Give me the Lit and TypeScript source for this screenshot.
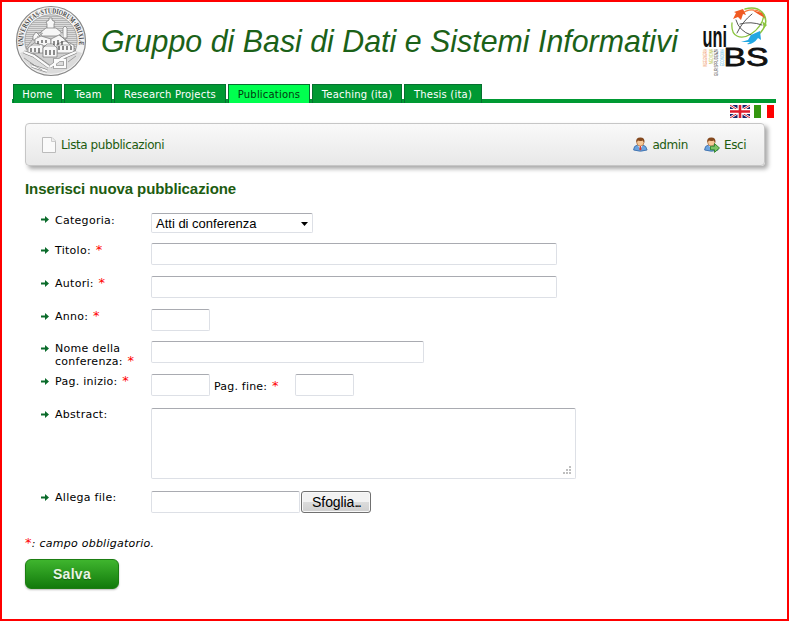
import { LitElement, html, svg, css } from "lit";
import { customElement } from "lit/decorators.js";

const arrow = html`<svg class="arrow" width="8" height="7" viewBox="0 0 8 7"><path d="M0 2.500h4V0L8 3.500 4 7V4.500H0z" fill="#0a6b2a"/></svg>`;
const star = html`<span class="star">*</span>`;

const seal = html`<svg class="seal" width="72" height="72" viewBox="15 5 72 72">
  <defs>
    <path id="ring" d="M23.500 46A27.900 27.900 0 1 1 78.500 46" />
    <pattern id="hatch" width="3" height="2" patternUnits="userSpaceOnUse"><rect width="3" height="2" fill="#dcdcdc"/><path d="M0 .5h3" stroke="#999" stroke-width=".6"/></pattern>
  </defs>
  <circle cx="51" cy="41" r="34.500" fill="#f3f3f3" stroke="#888" stroke-width="1.200"/>
  <circle cx="51" cy="41" r="26.200" fill="url(#hatch)" stroke="#999" stroke-width=".8"/>
  <text font-family="Liberation Serif, serif" font-size="7.500" font-weight="bold" fill="#444"><textPath href="#ring" textLength="96" lengthAdjust="spacingAndGlyphs">UNIVERSITAS·STUDIORUM·BRIXIÆ</textPath></text>
  <path d="M20 53L27 50 49 66 76 51 82 53A33.500 33.500 0 0 1 20 53z" fill="#dcdcdc"/>
  <path d="M26 48L36 35 47 29 56 29 64 38 76 50 51 66z" fill="#d0d0d0" stroke="#888" stroke-width=".6"/>
  <path d="M36 39L46 31h10l9 7" fill="none" stroke="#fff" stroke-width="3"/>
  <g fill="#f7f7f7" stroke="#777" stroke-width=".7">
    <path d="M47 29v-5l-1-2 3-2v-2h3v2l3 2-1 2v5z"/><path d="M41 32l5-4h10l5 4v4H41z"/>
    <path d="M63 38V28l2-2 2 2v10z"/><path d="M33 36l3-4 4 4v4h-7z"/><path d="M35 39l6-3 10 3v7H35z"/><path d="M51 39l8-4 7 5v8H51z"/>
    <path d="M28 48l6-5 9 2v8H28z"/><path d="M57 44l8-3 9 4v8H57z"/><path d="M43 48l4-4h6l4 4v9H43z"/>
  </g>
  <path d="M24 52l10 4 15 11M76 52l-14 6-12 9M32 66l15 5M55 60h10v7H55z" fill="none" stroke="#777" stroke-width="3.400"/>
  <path d="M24 52l10 4 15 11M76 52l-14 6-12 9M32 66l15 5M55 60h10v7H55z" fill="none" stroke="#fbfbfb" stroke-width="2.300"/>
  <path d="M38 41v3m4-4v3m4-3v3m8-2v4m4-5v5m4-4v4M31 48v4m4-4v4m4-4v5m7-3v5m4-5v5m4-5v5m5-9v4m4-4v4m4-4v4m4-4v4" stroke="#444" stroke-width="1.200"/>
  <path d="M37 37l6-4M59 34l12 12M44 46h11M31 45h9M57 45h14M24 58l10 7M68 62l8-6M30 63l12 7" stroke="#777" stroke-width=".6"/>
</svg>`;

const logo = html`<svg class="unibs" width="72" height="72" viewBox="698 6 72 72">
  <g fill="none" stroke-linecap="round">
    <path d="M739 15q7-6 14-5q9 1 11 8" stroke="#f47b3a" stroke-width="1.200"/>
    <path d="M744 9q11-3 17 3q8 9-1 20l-3 3" stroke="#8bc53f" stroke-width="1.500"/>
    <path d="M731 23q-1 10 5 13q6 3 14-2q11-7 13-19" stroke="#8bc53f" stroke-width="1.300"/>
    <path d="M735 20q3 11 15 15M751 14q-10 8-15 19M739 24q11-3 22 1" stroke="#444" stroke-width=".9"/>
  </g>
  <path d="M732 19l3-6-2-1 9-3 3 6-3-1-2 6-3-3z" fill="#f05a22"/>
  <path d="M751 10l10 3 3 5-7-4z" fill="#f05a22"/>
  <path d="M740 42l7-2 3-5 9-4 1 9-3-2q-5 7-11 6l3-2z" fill="#22a7e2"/>
  <path d="M761 21l5 4-3 3z" fill="#8bc53f"/>
  <text x="701.500" y="47" textLength="24.500" lengthAdjust="spacingAndGlyphs" class="uni">uni</text>
  <text x="722.500" y="66" textLength="45" lengthAdjust="spacingAndGlyphs" class="bs">BS</text>
  <g class="tiny">
    <text transform="translate(706 67) rotate(-90)" fill="#ee8b50" textLength="18" lengthAdjust="spacingAndGlyphs">INGEGNERIA</text>
    <text transform="translate(711.500 64) rotate(-90)" fill="#aebb30" textLength="15" lengthAdjust="spacingAndGlyphs">MEDICINA</text>
    <text transform="translate(717 76) rotate(-90)" fill="#444" textLength="27" lengthAdjust="spacingAndGlyphs">GIURISPRUDENZA</text>
    <text transform="translate(722.500 66) rotate(-90)" fill="#5bb8e4" textLength="17" lengthAdjust="spacingAndGlyphs">ECONOMIA</text>
  </g>
</svg>`;

const uk = html`<svg width="20" height="13" viewBox="0 0 20 13"><path fill="#17256b" d="M0 0h20v13H0z"/><path d="M0 0l20 13M20 0L0 13" stroke="#fff" stroke-width="2.400"/><path d="M0 0l20 13M20 0L0 13" stroke="#d8232f" stroke-width="1"/><path d="M10 0v13M0 6.500h20" stroke="#fff" stroke-width="5"/><path d="M10 0v13M0 6.500h20" stroke="#e01b2b" stroke-width="2.600"/></svg>`;
const it = html`<svg width="20" height="13" viewBox="0 0 20 13"><path fill="#fff" d="M0 0h20v13H0z"/><path fill="#34960f" d="M0 0h7v13H0z"/><path fill="#f00" d="M13 0h7v13h-7z"/></svg>`;

const person = svg`
  <path d="M.6 13Q.6 8.700 4.500 8h5q4 .5 4.600 5Q7.500 15.400.6 13z" fill="#6ba4e0" stroke="#3f70ad" stroke-width=".9"/>
  <path d="M4.600 8l2.700 4 2.600-4z" fill="#fff"/>
  <ellipse cx="7.300" cy="5.300" rx="3.600" ry="3.800" fill="#f6c797" stroke="#a8683a" stroke-width=".7"/>
  <path d="M3.300 5.500Q2.500.5 7.300.5t4.100 5Q10.500 5 9.800 3.500 7 4.500 4.800 3.600z" fill="#84481d"/>`;
const admin = html`<svg width="15" height="15" viewBox="0 0 15 15">${person}<path d="M6.800 9h1.100l.6 3.400-1.100 1.200-1.100-1.200z" fill="#d7372c"/></svg>`;
const exit = html`<svg width="16" height="16" viewBox="0 0 16 16">${person}<path d="M6.500 9.200h4V6.600l5 4.400-5 4.400v-2.600h-4z" fill="#7cc465" stroke="#2c8226" stroke-width=".9"/></svg>`;
const page = html`<svg width="14" height="16" viewBox="0 0 14 16"><path d="M.5.5h9.500L13.500 4v11.500H.5z" fill="#fafafa" stroke="#bbb"/><path d="M9.500.5V4.500h4" fill="#eee" stroke="#ccc"/></svg>`;

const TABS: [string, string][] = [
  ["Home", "w49"], ["Team", "w48"], ["Research Projects", "w112"],
  ["Publications", "w82 on"], ["Teaching (ita)", "w90"], ["Thesis (ita)", "w78"],
];

@customElement("app-root")
export class AppRoot extends LitElement {
  static styles = css`
    :host { display: block; font: 11px "DejaVu Sans", Verdana, sans-serif; color: #000; }
    * { box-sizing: border-box; }
    svg { display: block; flex: none; }
    .frame { width: 789px; height: 621px; border: 2px solid #f00; background: #fff; overflow: hidden; }
    header { display: flex; height: 82px; padding: 4px 0 0 13px; }
    .seal { margin-top: -1px; }
    .title { margin-left: 13px; overflow: visible; }
    .title text { font: italic 32px "Liberation Sans", Arial, sans-serif; fill: #1b6118; }
    .unibs { margin-left: 12px; }
    .uni { font: bold 29px "Liberation Sans", sans-serif; fill: #111; }
    .bs { font: 25.500px "Liberation Sans", sans-serif; fill: #111; stroke: #111; stroke-width: .8px; }
    .tiny { font: 6px "Liberation Sans", sans-serif; }
    nav { display: flex; gap: 2px; margin-left: 10px; width: 764px; height: 19px; padding-left: 1px; background: linear-gradient(#fff 15px, #093 15px); }
    .tab { height: 19px; border: 1px solid #067030; border-bottom: 0; background: #093; color: #fff; font-size: 10px; line-height: 20px; text-align: center; white-space: nowrap; letter-spacing: .2px; }
    .on { background: #00ff4f; color: #033a10; }
    .w49 { width: 49px; } .w48 { width: 48px; } .w112 { width: 112px; } .w82 { width: 82px; } .w90 { width: 90px; } .w78 { width: 78px; }
    .flags { display: flex; gap: 4px; justify-content: flex-end; padding: 2px 13px 0 0; height: 20px; }
    .bar { display: flex; align-items: center; margin-left: 23px; width: 740px; height: 43px; border: 1px solid #c6c6c6; border-radius: 4px; background: linear-gradient(#f9f9f9, #e8e8e8); box-shadow: 3px 3px 4px #aaa; padding: 0 18px 0 16px; font-size: 12px; color: #1d5c10; }
    .bar svg { margin-right: 4px; }
    .lista { letter-spacing: -.42px; margin-left: 1px; }
    .admin, .esci { letter-spacing: -.4px; }
    .esci { width: 22px; }
    .grow { flex: 1; }
    .exit { margin-left: 16px; }
    h1 { margin: 14px 0 0 23px; font: bold 15px/17px "Liberation Sans", Arial, sans-serif; letter-spacing: -.08px; color: #1d5c10; height: 33px; }
    .row { display: flex; margin-left: 39px; height: 33px; }
    .category { height: 30px; } .year { height: 32px; } .pages { height: 34px; } .abstract { height: 83px; } .attach { height: 46px; }
    .arrow { margin: 4px 6px 0 0; }
    .category .arrow, .abstract .arrow, .attach .arrow { margin-top: 3px; }
    .label { width: 96px; line-height: 13px; padding-top: 1px; letter-spacing: .28px; }
    .abstract .label, .attach .label { padding-top: 0; }
    .star { color: #f00; margin-left: 1px; font-size: 13px; line-height: 0; }
    .box { width: 406px; height: 22px; border: 1px solid #dde0e6; border-top-color: #a9abb1; border-radius: 2px; background: #fff; flex: none; }
    .small { width: 59px; } .mid { width: 273px; } .file { width: 149px; }
    .select { width: 162px; height: 20px; display: flex; justify-content: space-between; align-items: center; padding: 1px 4px 0; font: 13px "Liberation Sans", Arial, sans-serif; }
    .area { width: 425px; height: 71px; display: flex; align-items: flex-end; justify-content: flex-end; padding: 3px 4px; }
    .end { width: 85px; padding: 6px 0 0 4px; line-height: 13px; letter-spacing: .2px; }
    .browse { width: 70px; height: 22px; margin-left: 1px; border: 1px solid #707070; border-radius: 3px; background: linear-gradient(#f2f2f2 50%, #dcdcdc 50%, #cfcfcf); box-shadow: inset 0 0 0 1px #f8f8f8; font: 14px/21px "Liberation Sans", Arial, sans-serif; text-align: center; letter-spacing: -.1px; }
    .dots { letter-spacing: -2px; }
    .note { margin-left: 23px; height: 22px; line-height: 13px; font-style: italic; letter-spacing: .25px; }
    .note .star { margin: 0; }
    .save { margin-left: 23px; width: 94px; height: 30px; border: 1px solid #1c7d12; border-radius: 6px; background: linear-gradient(#3fb52e, #127a0c); box-shadow: 0 1px 2px #bbb; color: #e8f5e4; font: bold 14px/29px "Liberation Sans", Arial, sans-serif; letter-spacing: .3px; text-align: center; text-shadow: 0 1px 1px #0005; }
  `;

  private row(cls: string, label: unknown, field: unknown) {
    return html`<div class="row ${cls}">${arrow}<div class="label">${label}</div>${field}</div>`;
  }

  render() {
    return html`<div class="frame">
      <header>${seal}
        <svg class="title" width="587" height="72"><text x="1" y="46" textLength="577" lengthAdjust="spacingAndGlyphs">Gruppo di Basi di Dati e Sistemi Informativi</text></svg>
        ${logo}</header>
      <nav>${TABS.map(([t, c]) => html`<div class="tab ${c}">${t}</div>`)}</nav>
      <div class="flags">${uk}${it}</div>
      <div class="bar">${page}<span class="lista">Lista pubblicazioni</span><span class="grow"></span>${admin}<span class="admin">admin</span><span class="exit">${exit}</span><span class="esci">Esci</span></div>
      <h1>Inserisci nuova pubblicazione</h1>
      ${this.row("category", "Categoria:", html`<div class="box select">Atti di conferenza<svg width="7" height="4"><path d="M0 0h7L3.500 4z"/></svg></div>`)}
      ${this.row("", html`Titolo: ${star}`, html`<div class="box"></div>`)}
      ${this.row("", html`Autori: ${star}`, html`<div class="box"></div>`)}
      ${this.row("year", html`Anno: ${star}`, html`<div class="box small"></div>`)}
      ${this.row("", html`Nome della<br>conferenza: ${star}`, html`<div class="box mid"></div>`)}
      ${this.row("pages", html`Pag. inizio: ${star}`, html`<div class="box small"></div><div class="end">Pag. fine: ${star}</div><div class="box small"></div>`)}
      ${this.row("abstract", "Abstract:", html`<div class="box area"><svg width="9" height="9"><path d="M7 1h2M4 4h2m1 0h2M1 7h2m1 0h2m1 0h2" stroke="#aaa" stroke-width="1.500"/></svg></div>`)}
      ${this.row("attach", "Allega file:", html`<div class="box file"></div><div class="browse">Sfoglia<span class="dots">...</span></div>`)}
      <div class="note">${star}: campo obbligatorio.</div>
      <div class="save">Salva</div>
    </div>`;
  }
}
